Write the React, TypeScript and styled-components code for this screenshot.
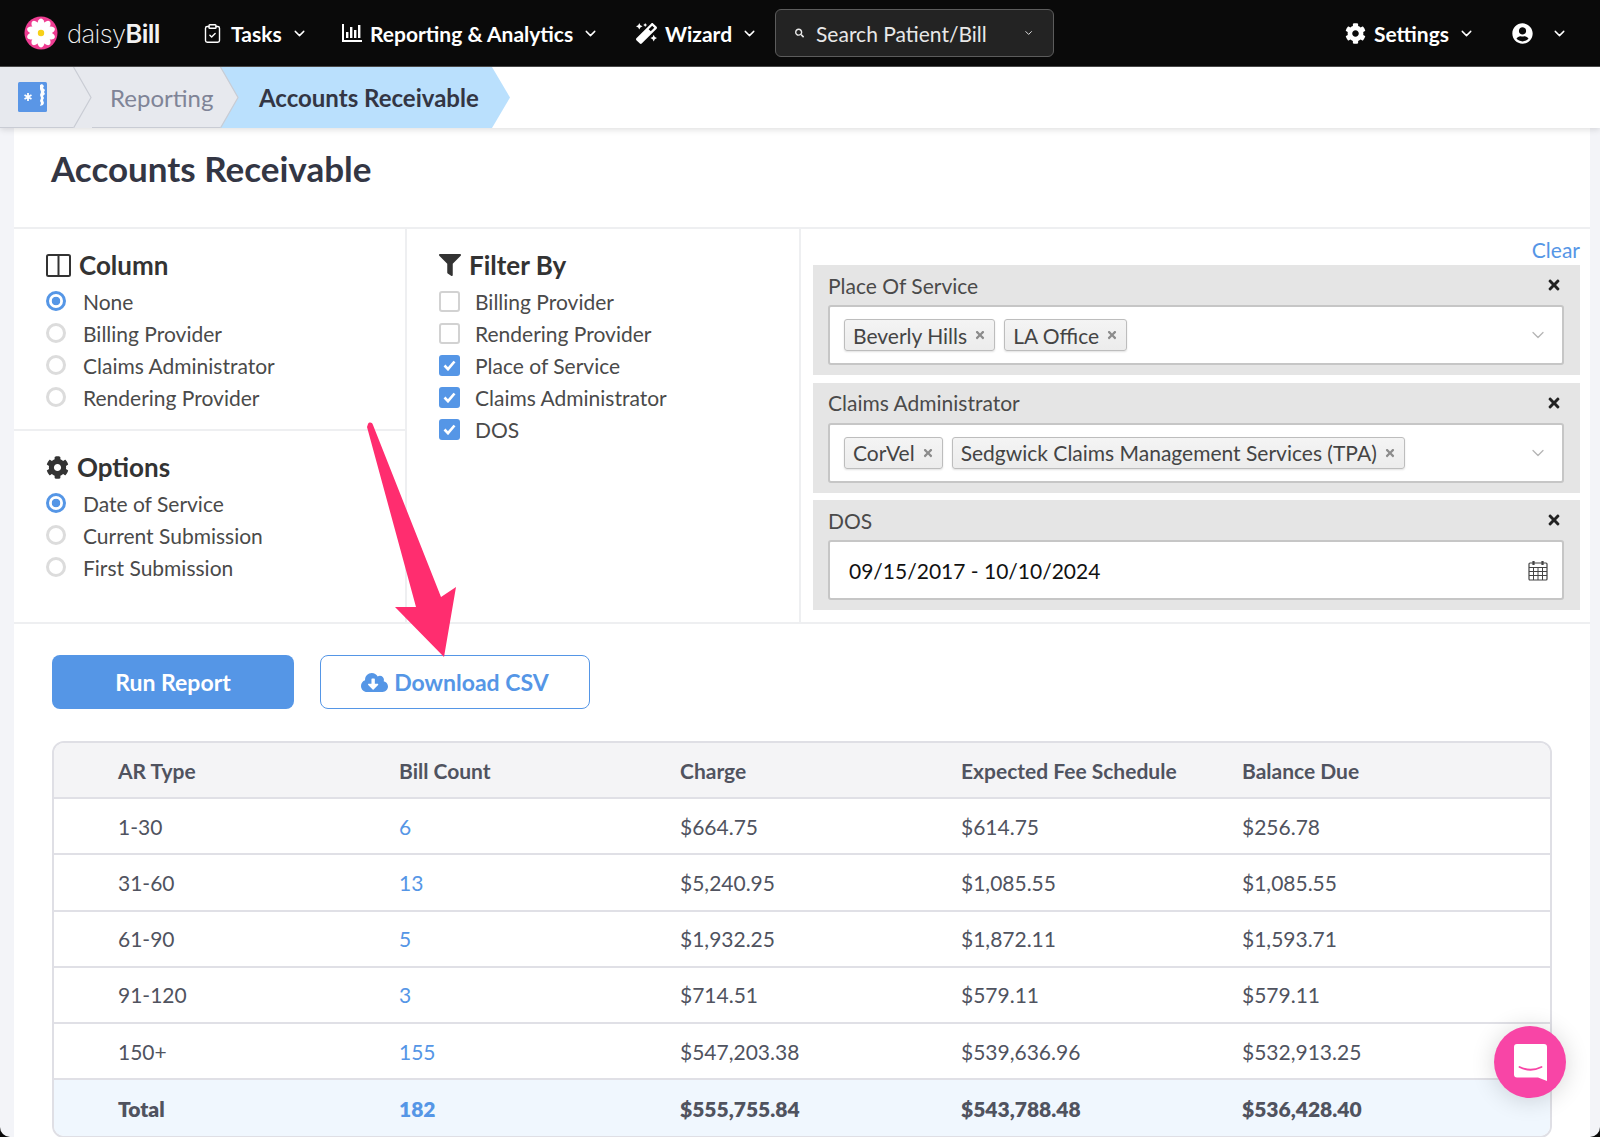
import React from 'react';
import styled, {createGlobalStyle} from "styled-components";
import {ChevronDown, ClipboardCheck} from "lucide-react";
import {FaCloudDownloadAlt, FaCog, FaFilter, FaMagic, FaSearch, FaTimes, FaUserCircle} from "react-icons/fa";

const GlobalStyle = createGlobalStyle`
  html, body {
    margin: 0;
    background: #0a0a0a;
  }
  body {
    font-family: "Lato", "Liberation Sans", sans-serif;
    color: #4a4a4a;
  }
`;

const Page = styled.div`
  position: relative;
  width: 1600px;
  height: 1137px;
  overflow: hidden;
  background: #f3f4f8;
  border-radius: 0 0 10px 10px;
`;

/* Top navigation */
const Nav = styled.nav`
  display: flex;
  align-items: center;
  height: 66px;
  border-bottom: 1px solid #4a4a4a;
  background: #0a0a0a;
  color: #fff;
  padding-left: 24px;
`;

const Logo = styled.div`
  display: flex;
  align-items: center;
  gap: 9px;
  width: 178px;
`;

const LogoText = styled.span`
  font-family: "Inter", sans-serif;
  font-size: 25.5px;
  font-weight: 200;
  letter-spacing: -0.6px;
  color: #f2f2f2;

  b {
    font-weight: 600;
  }
`;

const NavItem = styled.div<{$width: number}>`
  display: flex;
  align-items: center;
  gap: 8px;
  width: ${p => p.$width}px;
  font-size: 21px;
  font-weight: 700;
  white-space: nowrap;
`;

const NavChevron = styled(ChevronDown)`
  margin-left: 1px;
  flex: none;
`;

const SearchBox = styled.div`
  display: flex;
  align-items: center;
  box-sizing: border-box;
  width: 279px;
  height: 48px;
  margin-right: 291px;
  padding: 0 19px;
  gap: 12px;
  border: 1px solid #5c5c5c;
  border-radius: 6px;
  background: #232323;
  font-size: 21px;
  color: #e8e8e8;
  white-space: nowrap;

  svg:last-child {
    margin-left: 24px;
  }
`;

/* Breadcrumb trail */
const Crumbs = styled.div`
  position: relative;
  z-index: 1;
  display: flex;
  height: 61px;
  background: #fff;
  box-shadow: 0 2px 6px rgba(0, 0, 0, 0.12);
`;

const HomeCrumb = styled.div`
  display: flex;
  align-items: center;
  width: 55px;
  padding-left: 18px;
  background: #e7e9ee;
  border-bottom: 1px solid #c9ccd4;
`;

const GreyCrumb = styled.div`
  display: flex;
  align-items: center;
  box-sizing: border-box;
  width: 128px;
  padding-left: 18px;
  background: #e7e9ee;
  border-bottom: 1px solid #c9ccd4;
  font-size: 24px;
  color: #7f8497;
`;

const ActiveCrumb = styled.div`
  display: flex;
  align-items: center;
  box-sizing: border-box;
  width: 271px;
  padding-left: 20px;
  background: #bae0fd;
  clip-path: polygon(0 0, 253px 0, 100% 50%, 253px 100%, 0 100%);
  font-size: 24px;
  font-weight: 700;
  color: #333644;
`;

/* Main white sheet */
const Sheet = styled.main`
  margin: 0 10px 0 14px;
  background: #fff;
  height: 1009px;
`;

const TitleBar = styled.div`
  box-sizing: border-box;
  height: 101px;
  padding: 18px 0 0 37px;
  border-bottom: 2px solid #eeeff1;
`;

const Title = styled.h1`
  margin: 0;
  font-size: 35px;
  line-height: 44px;
  font-weight: 700;
  color: #333644;
`;

const Filters = styled.div`
  display: grid;
  grid-template-columns: 393px 394px 1fr;
  height: 393px;
  border-bottom: 2px solid #eeeff1;
`;

const FilterColumn = styled.div`
  border-right: 2px solid #eeeff1;
  &:last-child {
    border-right: 0;
  }
`;

const Group = styled.div<{$height?: number}>`
  box-sizing: border-box;
  padding: 20px 0 0 32px;
  height: ${p => p.$height ? `${p.$height}px` : "auto"};
  border-bottom: ${p => p.$height === 202 ? "2px solid #eeeff1" : "0"};
`;

const Heading = styled.h2`
  display: flex;
  align-items: center;
  gap: 8px;
  margin: 0 0 4px;
  font-size: 26px;
  line-height: 32px;
  font-weight: 700;
  color: #333;
`;

const OptionRow = styled.div`
  display: flex;
  align-items: center;
  height: 32px;
  font-size: 21px;
  color: #4a4a4a;
`;

const Radio = styled.span<{$on?: boolean}>`
  box-sizing: border-box;
  width: 20px;
  height: 20px;
  margin-right: 17px;
  border-radius: 50%;
  border: ${p => p.$on ? "3px solid #5596e6" : "3px solid #dcdcdc"};
  background: ${p => p.$on ? "radial-gradient(circle, #5596e6 0 4px, #fff 4.6px)" : "#fff"};
`;

const CheckBox = styled.span<{$on?: boolean}>`
  display: flex;
  align-items: center;
  justify-content: center;
  box-sizing: border-box;
  width: 21px;
  height: 21px;
  margin-right: 15px;
  border-radius: 3px;
  border: ${p => p.$on ? "0" : "2px solid #d2d2d2"};
  background: ${p => p.$on ? "#5596e6" : "#fff"};
`;

const PanelColumn = styled.div`
  display: flex;
  flex-direction: column;
  gap: 7.5px;
  padding: 0 10px 0 12px;
`;

const Clear = styled.a`
  height: 36px;
  box-sizing: border-box;
  padding-top: 7px;
  text-align: right;
  font-size: 21px;
  line-height: 28px;
  color: #5596e6;
  margin-bottom: -7.5px;
`;

const Panel = styled.section`
  height: 110px;
  box-sizing: border-box;
  padding: 0 16px 0 15px;
  background: #e5e5e5;
`;

const PanelHead = styled.div`
  display: flex;
  align-items: center;
  justify-content: space-between;
  height: 40px;
  padding-right: 2px;
  font-size: 21px;
  color: #4a4a4a;
`;

const Select = styled.div`
  display: flex;
  align-items: center;
  justify-content: space-between;
  box-sizing: border-box;
  height: 60px;
  padding: 0 14px;
  border: 2px solid #c6c6c6;
  border-radius: 3px;
  background: #fff;
`;

const Tags = styled.div`
  display: flex;
  gap: 9px;
`;

const Tag = styled.span`
  display: flex;
  align-items: center;
  gap: 7px;
  box-sizing: border-box;
  height: 32px;
  padding: 0 8px;
  border: 1px solid #bdbdbd;
  border-radius: 3px;
  background: linear-gradient(#f4f4f4, #ececec);
  box-shadow: 0 1px 2px rgba(0, 0, 0, 0.12);
  font-size: 21px;
  color: #444;
`;

const DateText = styled.span`
  font-size: 21px;
  padding-left: 5px;
  color: #111;
`;

const Actions = styled.div`
  display: flex;
  gap: 26px;
  padding: 31px 0 32px 38px;
`;

const Button = styled.button<{$outline?: boolean}>`
  display: flex;
  align-items: center;
  justify-content: center;
  gap: 6px;
  box-sizing: border-box;
  width: ${p => p.$outline ? 270 : 242}px;
  height: 54px;
  padding: 0;
  border: ${p => p.$outline ? "1.5px solid #5596e6" : "0"};
  border-radius: 8px;
  background: ${p => p.$outline ? "#fff" : "#5596e6"};
  color: ${p => p.$outline ? "#5596e6" : "#fff"};
  font-family: inherit;
  font-size: 23px;
  font-weight: 700;
`;

const Table = styled.div`
  box-sizing: border-box;
  width: 1500px;
  margin-left: 38px;
  border: 2px solid #dfdfe5;
  border-radius: 12px;
  overflow: hidden;
`;

const Row = styled.div<{$kind?: "head" | "total"}>`
  display: grid;
  grid-template-columns: repeat(5, 281px);
  align-items: center;
  box-sizing: border-box;
  height: 56.2px;
  padding-left: 64px;
  border-bottom: 2px solid #e0e0e6;
  background: ${p => p.$kind === "head" ? "#f4f4f6" : p.$kind === "total" ? "#f0f7fe" : "#fff"};
  font-size: 21px;
  font-weight: ${p => p.$kind === "head" ? 700 : p.$kind === "total" ? 800 : 400};
  color: #50535f;

  &:last-child {
    border-bottom: 0;
  }
`;

const Count = styled.a`
  color: #5596e6;
`;

/* Things lying over the page */
const Annotation = styled.svg`
  position: absolute;
  left: 360px;
  top: 415px;
  pointer-events: none;
`;

const ChatBubble = styled.div`
  position: absolute;
  left: 1494px;
  top: 1026px;
  display: flex;
  align-items: center;
  justify-content: center;
  width: 72px;
  height: 72px;
  border-radius: 50%;
  background: #f845a6;
  box-shadow: 0 2px 24px rgba(0, 0, 0, 0.16);
`;

const Flower = () => (
  <svg width="34" height="34" viewBox="0 0 34 34">
    <circle cx="17" cy="17" r="16.5" fill="#ee3d92"/>
    {[0, 36, 72, 108, 144, 180, 216, 252, 288, 324].map(a => (
      <ellipse key={a} cx="17" cy="8.5" rx="3.6" ry="6" fill="#fff" transform={`rotate(${a} 17 17)`}/>
    ))}
    <circle cx="17" cy="17" r="3.2" fill="#f7d117"/>
  </svg>
);

const ReportIcon = () => (
  <svg width="20" height="18" viewBox="0 0 20 18" fill="#fff">
    <path d="M0 0h2v16h18v2H0z"/>
    <rect x="4" y="8" width="2.4" height="6"/>
    <rect x="8" y="3" width="2.4" height="11"/>
    <rect x="12" y="6" width="2.4" height="8"/>
    <rect x="16" y="1" width="2.4" height="13"/>
  </svg>
);

const HomeIcon = () => (
  <svg width="29" height="30" viewBox="0 0 29 30">
    <rect width="29" height="30" rx="1.5" fill="#5a96e6"/>
    <path d="M22 3l2-1 2 2-1 2 2 2-1 2 1 2-2 2 1 2-1 2 1 3-1 2-3 1 1-3-1-2 1-3-1-3 1-3-1-3z" fill="#fff"/>
    <path d="M10 11v8M6.500 13l7 4M13.500 13l-7 4" stroke="#fff" strokeWidth="1.800"/>
  </svg>
);

const CrumbSeparator = ({onBlue}: {onBlue?: boolean}) => (
  <svg width="19" height="61" viewBox="0 0 19 61" style={{flex: "none", background: onBlue ? "#bae0fd" : "#e7e9ee"}}>
    <path d="M0 0L18 30.500L0 61z" fill="#e7e9ee"/>
    <path d="M0.500 0L18 30.500L0.500 61" fill="none" stroke="#c9ccd4" strokeWidth="1.200"/>
  </svg>
);

const ColumnsIcon = () => (
  <svg width="25" height="23" viewBox="0 0 25 23" fill="none" stroke="#333" strokeWidth="2">
    <rect x="1" y="1" width="23" height="21" rx="1.500"/>
    <path d="M12.500 1v21"/>
  </svg>
);

const CheckMark = () => (
  <svg width="13" height="11" viewBox="0 0 13 11" fill="none" stroke="#fff" strokeWidth="2.600">
    <path d="M1.500 5.500L5 9.200L11.500 1.500"/>
  </svg>
);

const TagClose = styled(FaTimes)`
  color: #8c8c8c;
  font-size: 12px;
`;

const CalendarIcon = () => (
  <svg width="20" height="21" viewBox="0 0 20 21" fill="none" stroke="#444" strokeWidth="1.200">
    <rect x="1" y="3" width="18" height="17" rx="1"/>
    <path d="M1 7.500h18M1 11.500h18M1 15.500h18M5.500 7.500v12.500M10 7.500v12.500M14.500 7.500v12.500" strokeWidth="1"/>
    <path d="M5.500 1v4M14.500 1v4" strokeWidth="2.200"/>
  </svg>
);

const ChatIcon = () => (
  <svg width="33" height="37" viewBox="0 0 33 37">
    <path d="M3 0h27a3 3 0 0 1 3 3v34l-9-3.500H3a3 3 0 0 1-3-3V3a3 3 0 0 1 3-3z" fill="#fff"/>
    <path d="M5.500 23c7 3.500 15 3.500 22 0" fill="none" stroke="#f845a6" strokeWidth="1.800" strokeLinecap="round"/>
  </svg>
);

interface ISelectPanel {
  label: string,
  tags: string[]
}

const panels: ISelectPanel[] = [
  {label: "Place Of Service", tags: ["Beverly Hills", "LA Office"]},
  {label: "Claims Administrator", tags: ["CorVel", "Sedgwick Claims Management Services (TPA)"]},
];

const rows = [
  ["1-30", "6", "$664.75", "$614.75", "$256.78"],
  ["31-60", "13", "$5,240.95", "$1,085.55", "$1,085.55"],
  ["61-90", "5", "$1,932.25", "$1,872.11", "$1,593.71"],
  ["91-120", "3", "$714.51", "$579.11", "$579.11"],
  ["150+", "155", "$547,203.38", "$539,636.96", "$532,913.25"],
];

const App: React.FC = () => (
  <Page>
    <GlobalStyle/>
    <Nav>
      <Logo>
        <Flower/>
        <LogoText>daisy<b>Bill</b></LogoText>
      </Logo>
      <NavItem $width={140}>
        <ClipboardCheck size={21} strokeWidth={1.6}/>Tasks<NavChevron size={17}/>
      </NavItem>
      <NavItem $width={294}>
        <ReportIcon/>Reporting &amp; Analytics<NavChevron size={17}/>
      </NavItem>
      <NavItem $width={139}>
        <FaMagic size={21}/>Wizard<NavChevron size={17}/>
      </NavItem>
      <SearchBox>
        <FaSearch size={16}/>Search Patient/Bill<ChevronDown size={20}/>
      </SearchBox>
      <NavItem $width={167}>
        <FaCog size={21}/>Settings<NavChevron size={17}/>
      </NavItem>
      <NavItem $width={60}>
        <FaUserCircle size={21}/><NavChevron size={17} style={{marginLeft: 10}}/>
      </NavItem>
    </Nav>

    <Crumbs>
      <HomeCrumb><HomeIcon/></HomeCrumb>
      <CrumbSeparator/>
      <GreyCrumb>Reporting</GreyCrumb>
      <CrumbSeparator onBlue/>
      <ActiveCrumb>Accounts Receivable</ActiveCrumb>
    </Crumbs>

    <Sheet>
      <TitleBar>
        <Title>Accounts Receivable</Title>
      </TitleBar>

      <Filters>
        <FilterColumn>
          <Group $height={202}>
            <Heading><ColumnsIcon/>Column</Heading>
            <OptionRow><Radio $on/>None</OptionRow>
            <OptionRow><Radio/>Billing Provider</OptionRow>
            <OptionRow><Radio/>Claims Administrator</OptionRow>
            <OptionRow><Radio/>Rendering Provider</OptionRow>
          </Group>
          <Group>
            <Heading><FaCog size={23}/>Options</Heading>
            <OptionRow><Radio $on/>Date of Service</OptionRow>
            <OptionRow><Radio/>Current Submission</OptionRow>
            <OptionRow><Radio/>First Submission</OptionRow>
          </Group>
        </FilterColumn>

        <FilterColumn>
          <Group>
            <Heading><FaFilter size={22}/>Filter By</Heading>
            <OptionRow><CheckBox/>Billing Provider</OptionRow>
            <OptionRow><CheckBox/>Rendering Provider</OptionRow>
            <OptionRow><CheckBox $on><CheckMark/></CheckBox>Place of Service</OptionRow>
            <OptionRow><CheckBox $on><CheckMark/></CheckBox>Claims Administrator</OptionRow>
            <OptionRow><CheckBox $on><CheckMark/></CheckBox>DOS</OptionRow>
          </Group>
        </FilterColumn>

        <PanelColumn>
          <Clear>Clear</Clear>
          {panels.map(panel => (
            <Panel key={panel.label}>
              <PanelHead>{panel.label}<FaTimes size={16} color="#222"/></PanelHead>
              <Select>
                <Tags>
                  {panel.tags.map(tag => <Tag key={tag}>{tag}<TagClose/></Tag>)}
                </Tags>
                <ChevronDown size={20} color="#b5b5b5" strokeWidth={1.5}/>
              </Select>
            </Panel>
          ))}
          <Panel>
            <PanelHead>DOS<FaTimes size={16} color="#222"/></PanelHead>
            <Select>
              <DateText>09/15/2017 - 10/10/2024</DateText>
              <CalendarIcon/>
            </Select>
          </Panel>
        </PanelColumn>
      </Filters>

      <Actions>
        <Button>Run Report</Button>
        <Button $outline><FaCloudDownloadAlt size={27}/>Download CSV</Button>
      </Actions>

      <Table>
        <Row $kind="head">
          <span>AR Type</span>
          <span>Bill Count</span>
          <span>Charge</span>
          <span>Expected Fee Schedule</span>
          <span>Balance Due</span>
        </Row>
        {rows.map(row => (
          <Row key={row[0]}>
            <span>{row[0]}</span>
            <Count>{row[1]}</Count>
            <span>{row[2]}</span>
            <span>{row[3]}</span>
            <span>{row[4]}</span>
          </Row>
        ))}
        <Row $kind="total">
          <span>Total</span>
          <Count>182</Count>
          <span>$555,755.84</span>
          <span>$543,788.48</span>
          <span>$536,428.40</span>
        </Row>
      </Table>
    </Sheet>

    <Annotation width="110" height="250" viewBox="0 0 110 250">
      <path d="M8 9C9 7 12 7 13 10L81 182L96 172L84 242L35 192L56 192L7 12z" fill="#ff2d6f"/>
    </Annotation>

    <ChatBubble><ChatIcon/></ChatBubble>
  </Page>
);

export default App;
